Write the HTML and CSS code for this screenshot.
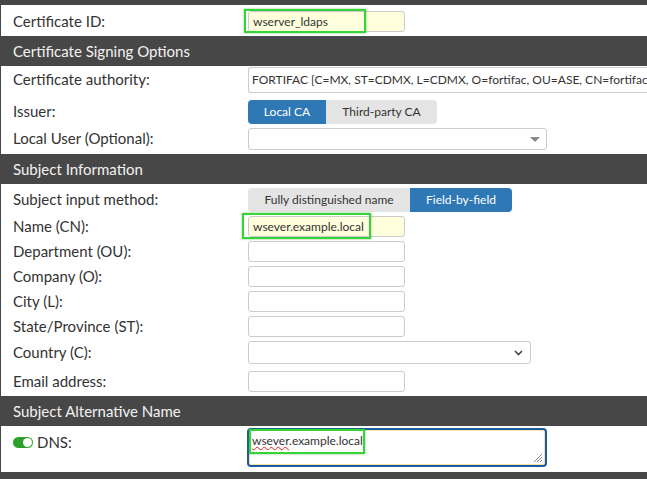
FILE: index.html
```html
<!DOCTYPE html>
<html lang="en">
<head>
  <meta charset="UTF-8">
  <title>Certificate</title>
  <link rel="stylesheet" href="styles.css">
</head>
<body>
  <div class="page">
    <div class="top-bar"></div>

    <div class="rows rows-id">
      <div class="row">
        <label class="field-label">Certificate ID:</label>
        <div class="field">
          <div class="input input-yellow">wserver_ldaps</div>
          <span class="mark mark-id"></span>
        </div>
      </div>
    </div>

    <div class="section-title">Certificate Signing Options</div>
    <div class="rows rows-sign">
      <div class="row">
        <label class="field-label">Certificate authority:</label>
        <div class="field">
          <div class="input input-wide">FORTIFAC [C=MX, ST=CDMX, L=CDMX, O=fortifac, OU=ASE, CN=fortifac]</div>
        </div>
      </div>
      <div class="row row-seg">
        <label class="field-label">Issuer:</label>
        <div class="seg">
          <span class="seg-btn active seg-local">Local CA</span>
          <span class="seg-btn seg-third">Third-party CA</span>
        </div>
      </div>
      <div class="row">
        <label class="field-label">Local User (Optional):</label>
        <div class="field">
          <div class="select select-user"><span class="caret"></span></div>
        </div>
      </div>
    </div>

    <div class="section-title">Subject Information</div>
    <div class="rows rows-subject">
      <div class="row row-seg">
        <label class="field-label">Subject input method:</label>
        <div class="seg">
          <span class="seg-btn seg-full">Fully distinguished name</span>
          <span class="seg-btn active seg-field">Field-by-field</span>
        </div>
      </div>
      <div class="row">
        <label class="field-label">Name (CN):</label>
        <div class="field">
          <div class="input input-yellow">wsever.example.local</div>
          <span class="mark mark-cn"></span>
        </div>
      </div>
      <div class="row">
        <label class="field-label">Department (OU):</label>
        <div class="field"><div class="input"></div></div>
      </div>
      <div class="row">
        <label class="field-label">Company (O):</label>
        <div class="field"><div class="input"></div></div>
      </div>
      <div class="row">
        <label class="field-label">City (L):</label>
        <div class="field"><div class="input"></div></div>
      </div>
      <div class="row">
        <label class="field-label">State/Province (ST):</label>
        <div class="field"><div class="input"></div></div>
      </div>
      <div class="row row-country">
        <label class="field-label">Country (C):</label>
        <div class="field">
          <div class="select select-country">
            <svg class="chevron" width="9" height="6" viewBox="0 0 9 6"><path d="M1 1l3.5 3.5L8 1" fill="none" stroke="#444" stroke-width="1.6"/></svg>
          </div>
        </div>
      </div>
      <div class="row">
        <label class="field-label">Email address:</label>
        <div class="field"><div class="input"></div></div>
      </div>
    </div>

    <div class="section-title">Subject Alternative Name</div>
    <div class="rows rows-san">
      <div class="row row-dns">
        <label class="field-label dns-label"><span class="toggle"><span class="knob"></span></span>DNS:</label>
        <div class="field">
          <div class="textarea"><span class="typo">wsever</span>.example.local
            <svg class="grip" width="12" height="12" viewBox="0 0 12 12"><path d="M11 3L3 11M11 6L6 11M11 9L9 11" stroke="#888" stroke-width="1"/></svg>
          </div>
          <span class="mark mark-dns"></span>
        </div>
      </div>
    </div>

    <div class="bottom-bar"></div>
  </div>
</body>
</html>
```

FILE: styles.css
```css
body {
  margin: 0;
  font-family: Lato, "Open Sans", sans-serif;
  color: #333;
  background: white;
  overflow: hidden;
}

.page {
  width: 647px;
  height: 479px;
  border-left: 1px solid #474747;
  box-sizing: border-box;
  overflow: hidden;
}

.top-bar {
  height: 5px;
  background: #474747;
}

.bottom-bar {
  height: 10px;
  background: #474747;
}

.section-title {
  height: 30px;
  line-height: 30px;
  background: #474747;
  color: #f2f2f2;
  font-size: 15px;
  padding-left: 12px;
}

.rows {
  display: flex;
  flex-direction: column;
  gap: 4px;
}

.rows-id {
  padding: 6px 0 4px;
}

.rows-sign {
  padding: 1px 0 4px;
}

.rows-sign .row-seg {
  margin-top: 3px;
}

.rows-subject {
  padding: 4px 0 4px;
}

.row-country {
  margin-bottom: 3px;
}

.rows-san {
  padding: 2px 0 5px;
}

.row {
  display: flex;
  align-items: center;
}

.field-label {
  width: 235px;
  padding-left: 12px;
  font-size: 15px;
  color: #333;
  flex-shrink: 0;
  margin-top: -2px;
}

.field {
  position: relative;
}

.input {
  width: 157px;
  height: 21px;
  box-sizing: border-box;
  border: 1px solid #ccc;
  border-radius: 3px;
  background: white;
  font-size: 12px;
  line-height: 19px;
  padding-left: 4px;
  white-space: nowrap;
  overflow: hidden;
}

.input-yellow {
  background: #ffffdd;
}

.input-wide {
  width: 420px;
  height: 26px;
  line-height: 24px;
  padding-left: 3px;
  border-right: none;
}

.select {
  position: relative;
  height: 22px;
  box-sizing: border-box;
  border: 1px solid #ccc;
  border-radius: 3px;
  background: white;
}

.select-user {
  width: 299px;
}

.select-country {
  width: 283px;
  height: 23px;
}

.caret {
  position: absolute;
  right: 6px;
  top: 8px;
  border-left: 5px solid transparent;
  border-right: 5px solid transparent;
  border-top: 5px solid #888;
}

.chevron {
  position: absolute;
  right: 7px;
  top: 8px;
}

.seg {
  display: flex;
  height: 24px;
  border-radius: 4px;
  overflow: hidden;
  font-size: 12px;
  line-height: 24px;
}

.seg-btn {
  background: #e4e4e4;
  color: #333;
  text-align: center;
}

.seg-btn.active {
  background: #2f78b6;
  color: white;
}

.seg-local { width: 78px; }
.seg-third { width: 111px; }
.seg-full { width: 162px; }
.seg-field { width: 102px; }

.mark {
  position: absolute;
  border: 2px solid #37d437;
  box-shadow: 0 0 2px rgba(40, 160, 40, 0.6);
  pointer-events: none;
}

.mark-id {
  left: -4px;
  top: -2px;
  width: 118px;
  height: 20px;
}

.mark-cn {
  left: -6px;
  top: -3px;
  width: 125px;
  height: 22px;
}

.mark-dns {
  left: 1px;
  top: 1px;
  width: 112px;
  height: 21px;
}

.dns-label {
  display: flex;
  align-items: center;
  gap: 4px;
  align-self: flex-start;
  margin-top: 5px;
}

.toggle {
  position: relative;
  width: 20px;
  height: 11px;
  border-radius: 6px;
  background: #2ba02b;
}

.knob {
  position: absolute;
  right: 1px;
  top: 1px;
  width: 9px;
  height: 9px;
  border-radius: 50%;
  background: white;
}

.textarea {
  position: relative;
  width: 300px;
  height: 39px;
  box-sizing: border-box;
  border: 2px solid #1c5aa6;
  border-radius: 4px;
  box-shadow: inset 0 0 0 1px #f4e4a0;
  font-size: 12px;
  line-height: 18px;
  padding: 2px 3px;
  margin-left: -1px;
}

.typo {
  text-decoration: underline wavy #d22;
  text-decoration-thickness: 1px;
}

.grip {
  position: absolute;
  right: 2px;
  bottom: 2px;
}
```
